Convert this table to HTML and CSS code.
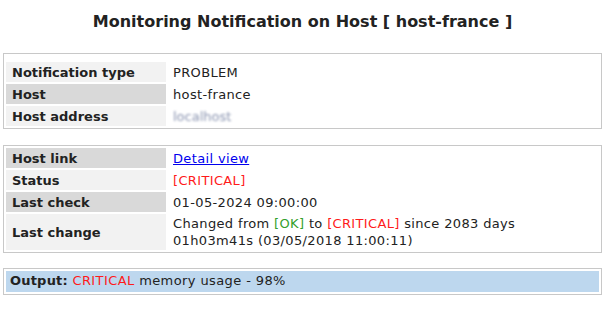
FILE: index.html
```html
<!DOCTYPE html>
<html>
<head>
<meta charset="utf-8">
<link rel="stylesheet" href="styles.css">
</head>
<body>
<h1 class="title">Monitoring Notification on Host [ host-france ]</h1>

<table class="box first">
  <tr><th class="lbl light">Notification type</th><td class="val">PROBLEM</td></tr>
  <tr><th class="lbl dark">Host</th><td class="val">host-france</td></tr>
  <tr><th class="lbl light">Host address</th><td class="val"><span class="blur">localhost</span></td></tr>
</table>

<table class="box">
  <tr><th class="lbl dark">Host link</th><td class="val"><a href="#" class="link">Detail view</a></td></tr>
  <tr><th class="lbl light">Status</th><td class="val"><span class="crit">[CRITICAL]</span></td></tr>
  <tr><th class="lbl dark">Last check</th><td class="val">01-05-2024 09:00:00</td></tr>
  <tr><th class="lbl light">Last change</th><td class="val">Changed from <span class="ok">[OK]</span> to <span class="crit">[CRITICAL]</span> since 2083 days<br>01h03m41s (03/05/2018 11:00:11)</td></tr>
</table>

<table class="box">
  <tr><td class="output"><b class="out-lbl">Output:</b> <span class="crit">CRITICAL</span> memory usage - 98%</td></tr>
</table>
</body>
</html>
```
FILE: styles.css
```css
body {
  margin: 0 7px 0 3px;
  font-family: "DejaVu Sans", Verdana, sans-serif;
  font-size: 13px;
  color: #222;
  background: #fff;
}
.title {
  font-size: 16px;
  font-weight: bold;
  text-align: center;
  margin: 12px 0 21px;
  line-height: 20px;
  color: #222;
}
.box {
  width: 100%;
  border: 1px solid #c8c8c8;
  border-spacing: 2px;
  margin: 0 0 15px;
  padding: 0;
}
.box.first {
  padding-top: 6px;
  margin-bottom: 16px;
}
.lbl {
  width: 160px;
  box-sizing: border-box;
  text-align: left;
  font-weight: bold;
  padding: 1px 6px;
  height: 20px;
  line-height: 17px;
}
.light { background: #f2f2f2; }
.dark { background: #d9d9d9; }
.val {
  padding: 1px 5px;
  line-height: 17px;
  letter-spacing: 0.35px;
}
.link { color: #0000ee; text-decoration: underline; }
.crit { color: #ff1a1a; }
.ok { color: #33a02c; }
.blur { color: #8a94b0; filter: blur(1.2px); letter-spacing: 0; }
.output {
  background: #bdd7ee;
  padding: 1px 4px 2px;
  line-height: 18px;
  letter-spacing: 0.4px;
}
.out-lbl { letter-spacing: 0.2px; }
```
